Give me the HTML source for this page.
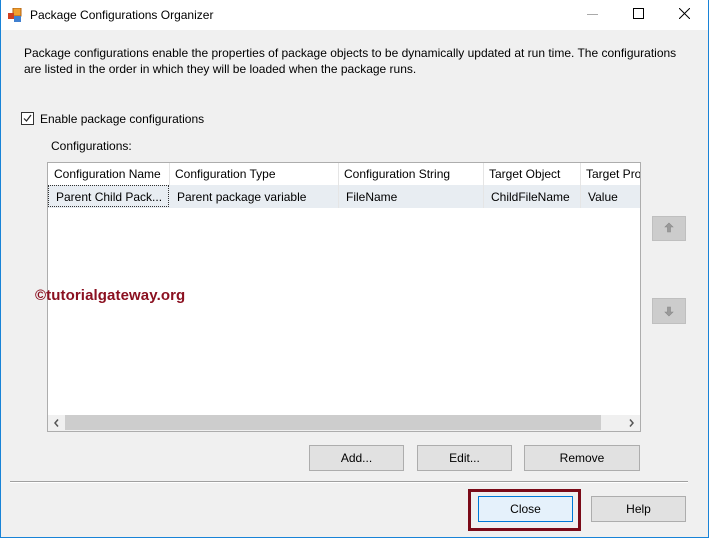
<!DOCTYPE html>
<html><head><style>
body{margin:0;width:709px;height:538px;overflow:hidden;background:#f0f0f0;font-family:"Liberation Sans",sans-serif;font-size:12px;color:#000;position:relative}
.a{position:absolute;white-space:nowrap}
.btn{position:absolute;background:#e1e1e1;border:1px solid #adadad;box-sizing:border-box;text-align:center;line-height:24px}
</style></head><body>
<div class="a" style="left:0;top:0;width:709px;height:30px;background:#fff"></div>
<div class="a" style="left:0;top:0;width:1px;height:538px;background:#1883d7"></div>
<div class="a" style="left:708px;top:0;width:1px;height:538px;background:#1883d7"></div>
<div class="a" style="left:0;top:537px;width:709px;height:1px;background:#1883d7"></div>
<svg class="a" style="left:8px;top:8px" width="14" height="14"><rect x="5" y="0" width="8" height="8" fill="#f0a030" stroke="#b06010"/><rect x="0" y="5" width="6" height="6" fill="#d04020"/><rect x="6" y="8" width="7" height="6" fill="#4080d0"/></svg>
<div class="a" style="left:30px;top:8px">Package Configurations Organizer</div>
<div class="a" style="left:587px;top:14px;width:11px;height:1px;background:#aaa"></div>
<div class="a" style="left:633px;top:8px;width:9px;height:9px;border:1px solid #000"></div>
<svg class="a" style="left:679px;top:8px" width="11" height="11"><path d="M0 0L11 11M11 0L0 11" stroke="#000"/></svg>
<div class="a" style="left:24px;top:45px;line-height:16px">Package configurations enable the properties of package objects to be dynamically updated at run time. The configurations<br>are listed in the order in which they will be loaded when the package runs.</div>
<div class="a" style="left:21px;top:112px;width:11px;height:11px;border:1px solid #333;background:#fff"></div>
<svg class="a" style="left:22px;top:113px" width="11" height="11"><path d="M2 5.5L4.5 8L9 2" stroke="#222" fill="none" stroke-width="1.2"/></svg>
<div class="a" style="left:40px;top:112px">Enable package configurations</div>
<div class="a" style="left:51px;top:139px">Configurations:</div>
<div class="a" style="left:47px;top:162px;width:594px;height:270px;border:1px solid #adadad;box-sizing:border-box;background:#fff"></div>
<div class="a" style="left:48px;top:185px;width:592px;height:23px;background:#e8edf2"></div>
<div class="a" style="left:169px;top:163px;width:1px;height:22px;background:#e5e5e5"></div>
<div class="a" style="left:338px;top:163px;width:1px;height:45px;background:#e5e5e5"></div>
<div class="a" style="left:483px;top:163px;width:1px;height:45px;background:#e5e5e5"></div>
<div class="a" style="left:580px;top:163px;width:1px;height:45px;background:#e5e5e5"></div>
<div class="a" style="left:48px;top:185px;width:121px;height:22px;border:1px dotted #333;box-sizing:border-box"></div>
<div class="a" style="left:54px;top:167px">Configuration Name</div>
<div class="a" style="left:175px;top:167px">Configuration Type</div>
<div class="a" style="left:344px;top:167px">Configuration String</div>
<div class="a" style="left:489px;top:167px">Target Object</div>
<div class="a" style="left:586px;top:167px;width:54px;overflow:hidden">Target Property</div>
<div class="a" style="left:56px;top:190px">Parent Child Pack...</div>
<div class="a" style="left:177px;top:190px">Parent package variable</div>
<div class="a" style="left:346px;top:190px">FileName</div>
<div class="a" style="left:491px;top:190px">ChildFileName</div>
<div class="a" style="left:588px;top:190px">Value</div>
<div class="a" style="left:48px;top:415px;width:592px;height:16px;background:#f0f0f0"></div>
<div class="a" style="left:65px;top:415px;width:536px;height:15px;background:#cdcdcd"></div>
<svg class="a" style="left:52px;top:418px" width="10" height="10"><path d="M6 1.5L3 5L6 8.5" stroke="#555" stroke-width="1.5" fill="none"/></svg>
<svg class="a" style="left:627px;top:418px" width="10" height="10"><path d="M3 1.5L6 5L3 8.5" stroke="#555" stroke-width="1.5" fill="none"/></svg>
<div class="a" style="left:35px;top:287px;font-size:15px;font-weight:bold;color:#8b1020;letter-spacing:0.1px">©tutorialgateway.org</div>
<div class="a" style="left:652px;top:216px;width:34px;height:25px;background:#ccc;border:1px solid #bfbfbf;box-sizing:border-box"></div>
<svg class="a" style="left:664px;top:222px" width="10" height="12"><path d="M5 1L1 5H3.5V10H6.5V5H9Z" fill="#9a9a9a" stroke="#888" stroke-width="0.6"/></svg>
<div class="a" style="left:652px;top:298px;width:34px;height:26px;background:#ccc;border:1px solid #bfbfbf;box-sizing:border-box"></div>
<svg class="a" style="left:664px;top:305px" width="10" height="12"><path d="M5 11L1 7H3.5V2H6.5V7H9Z" fill="#9a9a9a" stroke="#888" stroke-width="0.6"/></svg>
<div class="btn" style="left:309px;top:445px;width:95px;height:26px">Add...</div>
<div class="btn" style="left:417px;top:445px;width:95px;height:26px">Edit...</div>
<div class="btn" style="left:524px;top:445px;width:116px;height:26px">Remove</div>
<div class="a" style="left:10px;top:481px;width:678px;height:1px;background:#a0a0a0"></div>
<div class="a" style="left:10px;top:482px;width:678px;height:1px;background:#fff"></div>
<div class="a" style="left:468px;top:489px;width:113px;height:42px;border:3px solid #7b0a18;box-sizing:border-box"></div>
<div class="btn" style="left:478px;top:496px;width:95px;height:26px;background:#e5f1fb;border-color:#0078d7">Close</div>
<div class="btn" style="left:591px;top:496px;width:95px;height:26px">Help</div>
</body></html>
